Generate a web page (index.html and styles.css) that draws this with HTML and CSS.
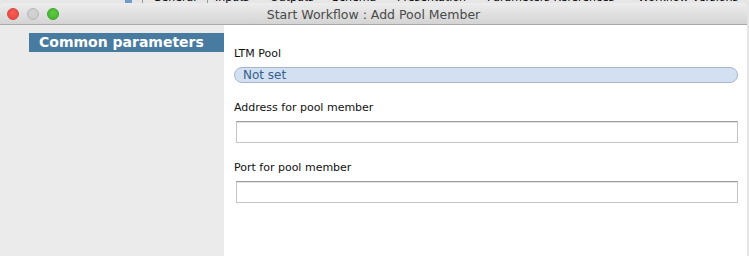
FILE: index.html
```html
<!DOCTYPE html>
<html lang="en">
<head>
    <meta charset="UTF-8">
    <title>Start Workflow : Add Pool Member</title>
    <link rel="stylesheet" href="styles.css">
</head>
<body>
    <!-- tabs of the editor behind the sheet -->
    <div class="behind">
        <span class="behind-mark"></span>
        <span class="tab tab-general">General</span>
        <span class="tab tab-inputs">Inputs</span>
        <span class="tab tab-outputs">Outputs</span>
        <span class="tab tab-schema">Schema</span>
        <span class="tab tab-presentation">Presentation</span>
        <span class="tab tab-params">Parameters References</span>
        <span class="tab tab-versions">Workflow Versions</span>
    </div>

    <div class="window">
        <div class="titlebar">
            <div class="lights">
                <span class="light red"></span>
                <span class="light grey"></span>
                <span class="light green"></span>
            </div>
            <div class="title">Start Workflow : Add Pool Member</div>
        </div>

        <div class="window-body">
            <div class="sidebar">
                <div class="section-head">Common parameters</div>
            </div>
            <div class="form">
                <div class="field">
                    <label>LTM Pool</label>
                    <div class="chooser">Not set</div>
                </div>
                <div class="field">
                    <label>Address for pool member</label>
                    <input type="text" class="text-input">
                </div>
                <div class="field">
                    <label>Port for pool member</label>
                    <input type="text" class="text-input">
                </div>
            </div>
        </div>
    </div>
</body>
</html>
```

FILE: styles.css
```css
html, body {
    margin: 0;
    height: 100%;
    overflow: hidden;
}
body {
    font-family: 'Lucida Grande', 'DejaVu Sans', sans-serif;
    background-color: #e4e4e4;
    color: #222;
}
.behind {
    position: relative;
    height: 3px;
    overflow: hidden;
    background-color: #e6e6e6;
}
.behind-mark {
    position: absolute;
    left: 125px;
    top: 0;
    width: 7px;
    height: 3px;
    background-color: #6f9cc9;
}
.tab {
    position: absolute;
    top: -9px;
    font-size: 11px;
    line-height: 13px;
    color: #000;
    white-space: nowrap;
}
.tab-general { left: 153px; }
.tab-inputs { left: 215px; }
.tab-outputs { left: 270px; }
.tab-schema { left: 332px; }
.tab-presentation { left: 397px; }
.tab-params { left: 487px; }
.tab-versions { left: 638px; }
.tab-general::before,
.tab-inputs::before {
    content: '';
    position: absolute;
    top: 0;
    height: 14px;
    border-left: 1px solid #9a9a9a;
}
.tab-general::before { left: -11px; }
.tab-inputs::before { left: -8px; }
.window {
    width: 747px;
    height: 100%;
    background-color: #fff;
    border-radius: 5px 5px 0 0;
    overflow: hidden;
}
.titlebar {
    position: relative;
    height: 21px;
    background: linear-gradient(#ededed, #d4d4d4);
    border-bottom: 1px solid #a9a9a9;
    display: flex;
    align-items: center;
    justify-content: center;
}
.lights {
    position: absolute;
    left: 7px;
    top: 5px;
    display: flex;
    gap: 8px;
}
.light {
    width: 12px;
    height: 12px;
    border-radius: 50%;
    box-sizing: border-box;
}
.red {
    background: radial-gradient(circle at 50% 40%, #fb5e57, #e2443d);
    border: 1px solid #d5453f;
}
.grey {
    background: radial-gradient(circle at 50% 40%, #d6d6d6, #c8c8c8);
    border: 1px solid #b8b8b8;
}
.green {
    background: radial-gradient(circle at 50% 40%, #5fcc44, #3fae2a);
    border: 1px solid #3ea42b;
}
.title {
    font-size: 12.5px;
    color: #4a4a4a;
    margin-top: 1px;
}
.window-body {
    display: flex;
    height: calc(100% - 22px);
}
.sidebar {
    flex-shrink: 0;
    width: 224px;
    background-color: #ebebeb;
    padding-top: 8px;
}
.section-head {
    margin-left: 29px;
    height: 19px;
    line-height: 19px;
    padding-left: 10px;
    background-color: #487ba0;
    color: #fff;
    font-weight: bold;
    font-size: 14px;
    white-space: nowrap;
}
.form {
    flex: 1;
    padding: 22px 10px 0 10px;
}
.field {
    margin-bottom: 18px;
}
.field label {
    display: block;
    font-size: 11px;
    line-height: 13px;
    color: #111;
    margin-bottom: 7px;
}
.chooser {
    height: 14px;
    line-height: 14px;
    border: 1px solid #a7b6cd;
    border-radius: 8px;
    background-color: #d2e0f2;
    color: #355f8c;
    font-size: 12px;
    padding-left: 8px;
    margin-bottom: 1px;
}
.text-input {
    display: block;
    box-sizing: border-box;
    width: 502px;
    height: 22px;
    margin-left: 2px;
    border: 1px solid #c4c4c4;
    border-top-color: #9c9c9c;
    box-shadow: inset 0 1px 0 #e2e2e2;
    background-color: #fff;
    padding: 0;
    outline: none;
}
```
